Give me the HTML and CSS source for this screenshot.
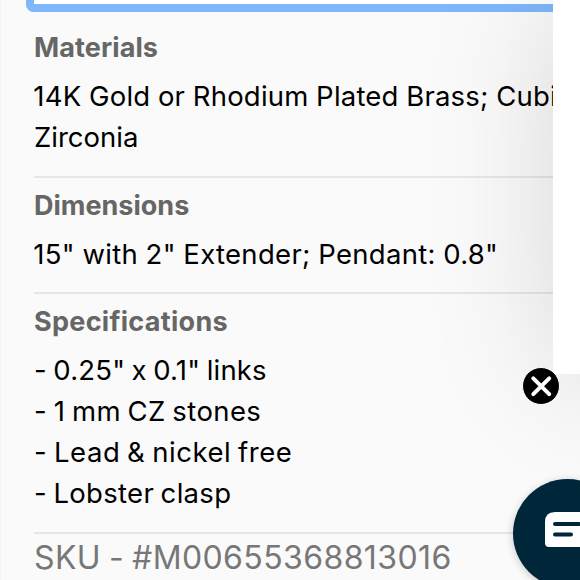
FILE: index.html
```
<!DOCTYPE html>
<html lang="en">
<head>
<meta charset="UTF-8">
<meta name="viewport" content="width=device-width, initial-scale=1.0">
<title>Product Details</title>
<link rel="stylesheet" href="styles.css">
</head>
<body>

<div class="product">
    <div class="select-box"></div>

    <div class="section">
        <h3 class="materials">Materials</h3>
        <p class="brass">14K Gold or Rhodium Plated Brass; Cubic</p>
        <p class="zirconia">Zirconia</p>
    </div>
    <div class="section">
        <h3 class="dimensions">Dimensions</h3>
        <p class="size">15" with 2" Extender; Pendant: 0.8"</p>
    </div>
    <div class="section">
        <h3 class="specs">Specifications</h3>
        <p class="links">- 0.25" x 0.1" links</p>
        <p class="stones">- 1 mm CZ stones</p>
        <p class="free">- Lead &amp; nickel free</p>
        <p class="clasp">- Lobster clasp</p>
    </div>
    <div class="sku">SKU - #M00655368813016</div>
</div>

<div class="popup"></div>
<button class="close-button" aria-label="Close">
    <svg width="38" height="38" viewBox="0 0 38 38">
        <circle cx="19" cy="19" r="18.5" fill="#000" stroke="#fff" stroke-width="1"/>
        <path d="M11.3 11.3L27.2 27.2M27.2 11.3L11.3 27.2" stroke="#fff" stroke-width="4" stroke-linecap="round"/>
    </svg>
</button>
<button class="chat-button" aria-label="Chat">
    <svg width="44" height="35" viewBox="0 0 44 35">
        <path d="M10 0H34Q44 0 44 10V35H4Q0 35 0 31V10Q0 0 10 0Z" fill="#fff"/>
        <path d="M10 12H34M10 22.5H26" stroke="#00263a" stroke-width="4" stroke-linecap="round"/>
    </svg>
</button>

</body>
</html>
```
FILE: styles.css
```
html {
    overflow: hidden;
}

body {
    margin: 0;
    height: 580px;
    overflow: hidden;
    position: relative;
    font-family: Inter, "Liberation Sans", sans-serif;
    font-feature-settings: "calt" 0;
    background-color: #fafafa;
    border-left: 1px solid #f5f5f5;
    box-sizing: border-box;
}

.product {
    padding-left: 33px;
}

/* Bottom edge of the option picker */
.select-box {
    height: 12px;
    margin-left: -8px;
    margin-bottom: 8px;
    box-sizing: border-box;
    border: 8px solid #7fb7fb;
    border-top: none;
    border-radius: 0 0 8px 8px;
    background-color: #fff;
}

.section {
    padding: 11px 0 17.5px;
    border-bottom: 2px solid #e6e6e6;
}

h3 {
    margin: 0 0 12px;
    font-size: 27px;
    line-height: 33px;
    font-weight: 700;
    color: #666;
}

p {
    margin: 0;
    font-size: 27.5px;
    line-height: 41px;
    color: #000;
    white-space: nowrap;
    overflow: hidden;
}

.sku {
    font-size: 32px;
    line-height: 48px;
    color: #777;
    white-space: nowrap;
    letter-spacing: 0.4px;
    word-spacing: -1.5px;
}

.materials {
    letter-spacing: 0.1px;
}

.specs {
    letter-spacing: 0.3px;
}

.brass {
    letter-spacing: 0.2px;
    word-spacing: -0.3px;
    text-indent: -0.7px;
}

.size {
    letter-spacing: 0.3px;
    word-spacing: -0.5px;
    text-indent: -0.7px;
}

.links {
    letter-spacing: 0.2px;
    word-spacing: -1.5px;
}

.stones {
    letter-spacing: 0.4px;
    word-spacing: -1.5px;
}

.free {
    letter-spacing: 0.55px;
    word-spacing: -1.5px;
}

.clasp {
    letter-spacing: 0.3px;
    word-spacing: -1.5px;
}

.popup {
    position: absolute;
    left: 552px;
    top: 0;
    width: 400px;
    height: 374px;
    background-color: #fff;
    box-shadow: 0 0 130px rgba(0, 0, 0, 0.14);
}

button {
    border: none;
    padding: 0;
    cursor: pointer;
}

.close-button {
    position: absolute;
    left: 521px;
    top: 367px;
    width: 38px;
    height: 38px;
    background: none;
}

.close-button svg {
    display: block;
}

.chat-button {
    position: absolute;
    left: 511.5px;
    top: 479px;
    width: 109px;
    height: 109px;
    border-radius: 50%;
    background-color: #00263a;
    box-shadow: 0 2px 8px rgba(0, 0, 0, 0.2);
    display: flex;
    align-items: flex-start;
    padding: 32.5px 0 0 32.5px;
}
```
